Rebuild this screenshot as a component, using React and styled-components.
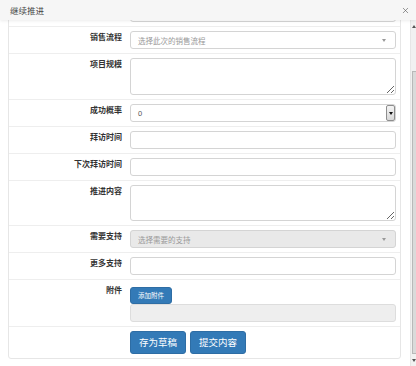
import React, { useLayoutEffect, useRef, useState } from 'react';
import styled, { createGlobalStyle } from 'styled-components';
import { X } from 'lucide-react';

const GlobalStyle = createGlobalStyle`
  html, body {
    margin: 0;
    padding: 0;
    background: #fff;
    overflow: hidden;
    font-family: "Liberation Sans", "Noto Sans CJK SC", sans-serif;
    color: #333;
  }
`;

const Modal = styled.div`
  width: 416px;
  height: 366px;
  overflow: hidden;
  display: flex;
  flex-direction: column;
`;

const Header = styled.div`
  height: 20px;
  flex-shrink: 0;
  display: flex;
  align-items: center;
  justify-content: space-between;
  padding: 0 6px 0 10px;
  background: #f6f6f6;
  box-shadow: 0 1px 3px rgba(0, 0, 0, 0.08);
  position: relative;
  z-index: 2;
`;

const Title = styled.span`
  font-size: 8.5px;
  color: #444;
`;

const Close = styled.span`
  display: flex;
  color: #555;
`;

const Body = styled.div`
  flex: 1;
  display: flex;
  min-height: 0;
`;

const Scroller = styled.div`
  width: 410px;
  height: 346px;
  overflow: hidden;
  background: #fff;
`;

const Track = styled.div`
  width: 6px;
  height: 346px;
  box-sizing: border-box;
  background: #f1f1f1;
  border-left: 1px solid #e6e6e6;
  display: flex;
  flex-direction: column;
`;

const Arrow = styled.div`
  height: 12px;
  flex-shrink: 0;
  display: flex;
  align-items: center;
  padding-left: 1px;

  &::after {
    content: '';
    border-left: 2px solid transparent;
    border-right: 2px solid transparent;
    ${p => (p.$down ? 'border-top: 3px solid #555;' : 'border-bottom: 3px solid #555;')}
  }
`;

const Lane = styled.div`
  flex: 1;
  display: flex;
  flex-direction: column;
`;

const Thumb = styled.div`
  box-sizing: border-box;
  margin-left: 1px;
  background: #dadada;
  border: 1px solid #b8b8b8;
  border-right: none;
`;

const Panel = styled.div`
  margin: 8px 9px 7px 8px;
  border: 1px solid #e6e6e6;
  border-radius: 3px;
`;

const Row = styled.div`
  display: grid;
  grid-template-columns: 113px 1fr;
  column-gap: 8px;
  padding: 4px 4px 4px 0;
  & + & {
    border-top: 1px solid #eeeeee;
  }
`;

const Label = styled.label`
  text-align: right;
  font-size: 8px;
  font-weight: bold;
  line-height: 14px;
  color: #333;
`;

const Field = styled.div`
  display: flex;
  flex-direction: column;
`;

const Input = styled.div`
  box-sizing: border-box;
  height: 18px;
  border: 1px solid #d4d4d4;
  border-radius: 3px;
  background: ${p => (p.$disabled ? '#e9e9e9' : '#fff')};
  display: flex;
  align-items: center;
  padding: 0 8px 0 7px;
  font-size: 7.5px;
  color: ${p => (p.$muted ? '#999' : '#555')};
`;

const Text = styled.span`
  flex: 1;
`;

const Caret = styled.span`
  width: 0;
  height: 0;
  border-left: 2.5px solid transparent;
  border-right: 2.5px solid transparent;
  border-top: 3px solid #999;
  margin-right: 1px;
`;

const NativeButton = styled.span`
  box-sizing: border-box;
  width: 9px;
  height: 16px;
  margin-right: -8px;
  border: 1px solid #8e8e8e;
  border-radius: 2px;
  background: linear-gradient(#f4f4f4, #d8d8d8);
  display: flex;
  align-items: center;
  justify-content: center;

  &::after {
    content: '';
    border-left: 2px solid transparent;
    border-right: 2px solid transparent;
    border-top: 3px solid #111;
  }
`;

const Area = styled.textarea`
  box-sizing: border-box;
  height: ${p => p.$h}px;
  width: 100%;
  margin: 0;
  border: 1px solid #d4d4d4;
  border-radius: 3px;
  resize: vertical;
  font-size: 7.5px;
  display: block;
  outline: none;
`;

const Button = styled.button`
  box-sizing: border-box;
  border: 1px solid #2e6da4;
  border-radius: 3px;
  background: #337ab7;
  color: #fff;
  font-family: inherit;
  font-size: ${p => (p.$small ? '6.5px' : '9.5px')};
  height: ${p => (p.$small ? '17px' : '23px')};
  padding: ${p => (p.$small ? '0 7px' : '0 8px')};
  cursor: pointer;
`;

const UploadBar = styled.div`
  box-sizing: border-box;
  height: 18px;
  background: #eeeeee;
  border: 1px solid #dddddd;
  border-radius: 3px;
`;

const Actions = styled.div`
  display: flex;
  gap: 4px;
`;

const App = () => {
  const scrollRef = useRef(null);
  const [thumb, setThumb] = useState({ top: 0, size: 1 });

  useLayoutEffect(() => {
    const el = scrollRef.current;
    if (!el) return;
    el.scrollTop = el.scrollHeight;
    const total = el.scrollHeight;
    setThumb({ top: el.scrollTop / total, size: el.clientHeight / total });
  }, []);

  return (
    <>
      <GlobalStyle />
      <Modal>
        <Header>
          <Title>继续推进</Title>
          <Close>
            <X size={9} strokeWidth={1.6} />
          </Close>
        </Header>
        <Body>
          <Scroller ref={scrollRef}>
            <Panel>
              <Row>
                <Label />
                <Area $h={37} />
              </Row>
              <Row>
                <Label>销售流程</Label>
                <Input $muted>
                  <Text>选择此次的销售流程</Text>
                  <Caret />
                </Input>
              </Row>
              <Row>
                <Label>项目规模</Label>
                <Area $h={37} />
              </Row>
              <Row>
                <Label>成功概率</Label>
                <Input>
                  <Text>0</Text>
                  <NativeButton />
                </Input>
              </Row>
              <Row>
                <Label>拜访时间</Label>
                <Input />
              </Row>
              <Row>
                <Label>下次拜访时间</Label>
                <Input />
              </Row>
              <Row>
                <Label>推进内容</Label>
                <Area $h={36} />
              </Row>
              <Row>
                <Label>需要支持</Label>
                <Input $muted $disabled>
                  <Text>选择需要的支持</Text>
                  <Caret />
                </Input>
              </Row>
              <Row>
                <Label>更多支持</Label>
                <Input />
              </Row>
              <Row>
                <Label>附件</Label>
                <Field>
                  <div>
                    <Button $small>添加附件</Button>
                  </div>
                  <UploadBar />
                </Field>
              </Row>
              <Row>
                <span />
                <Actions>
                  <Button>存为草稿</Button>
                  <Button>提交内容</Button>
                </Actions>
              </Row>
            </Panel>
          </Scroller>
          <Track>
            <Arrow />
            <Lane>
              <div style={{ flex: thumb.top }} />
              <Thumb style={{ flex: thumb.size }} />
            </Lane>
            <Arrow $down />
          </Track>
        </Body>
      </Modal>
    </>
  );
};

export default App;
